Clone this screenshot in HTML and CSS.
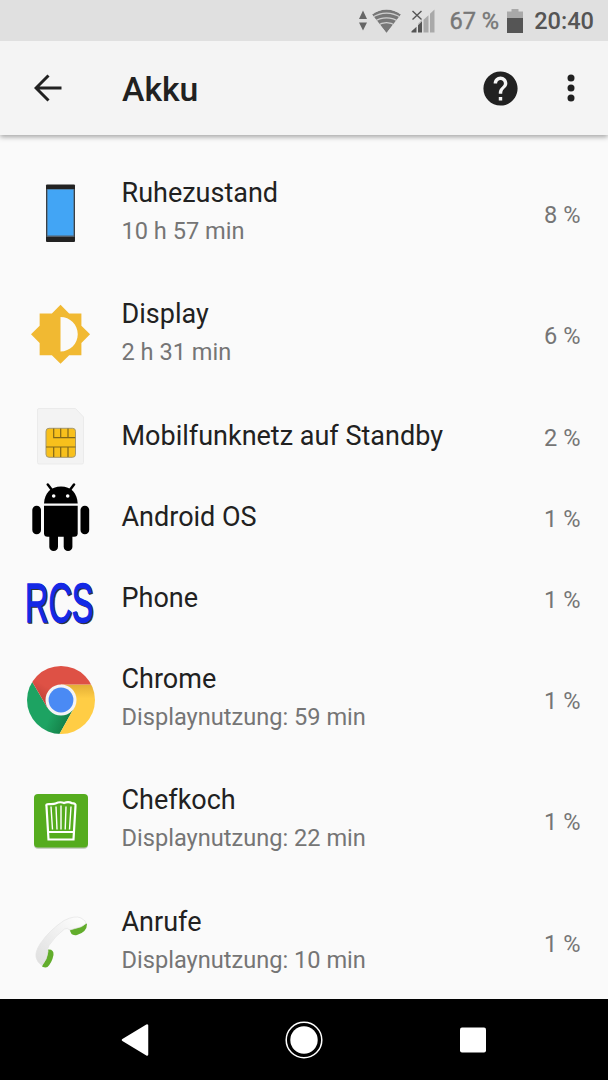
FILE: index.html
```html
<!DOCTYPE html>
<html lang="de">
<head>
    <meta charset="UTF-8">
    <meta name="viewport" content="width=device-width, initial-scale=1.0">
    <title>Akku</title>
    <link rel="stylesheet" href="styles.css">
</head>
<body>

<div class="screen">
    <div class="status-bar">
        <svg class="status-icons" width="76" height="24" viewBox="0 0 76 24">
            <path d="M0 10l4-8.500 4 8.500zM0 13.500h8l-4 8z" fill="#666"/>
            <clipPath id="fan"><path d="M13 5.500Q27.500-4.500 42 5.500L27.500 24z"/></clipPath>
            <g clip-path="url(#fan)">
                <path d="M13 5.500Q27.500-4.500 42 5.500L27.500 24z" fill="#777"/>
                <path d="M12 9.200Q27.500-1 43 9.200M14 13.200Q27.500 4.500 41 13.200M18 16.700Q27.500 10.500 37 16.700" fill="none" stroke="#cfcfcf" stroke-width="1.300"/>
            </g>
            <path d="M53.500 2l9 8.500M62.500 2l-9 8.500" stroke="#555" stroke-width="1.400"/>
            <path d="M52.500 23.500v-1.200l5-4.500v5.700zM59 23.500v-7.200l4-4v11.200z" fill="#555"/>
            <path d="M64.500 23.500V10.800l5-4.600v17.300zM71 23.500V4.800l4.500-4.300v23z" fill="#a9a9a9"/>
            <path d="M59 16.300l4-4V11l-4 4z" fill="#a9a9a9"/>
        </svg>
        <span class="battery-level">67 %</span>
        <svg class="battery" width="16" height="24" viewBox="0 0 16 24">
            <path d="M0 2.500h4.500V0h7v2.500H16V9H0z" fill="#a9a9a9"/>
            <path d="M0 9h16v15H0z" fill="#555"/>
        </svg>
        <span class="clock">20:40</span>
    </div>

    <div class="toolbar">
        <svg class="back" width="28" height="28" viewBox="0 0 28 28">
            <path d="M14.500 1.500L2 14l12.500 12.500M2 14h25.500" fill="none" stroke="#212121" stroke-width="3"/>
        </svg>
        <h1>Akku</h1>
        <svg class="help" width="41" height="41" viewBox="0 0 24 24">
            <path fill="#212121" d="M12 2C6.480 2 2 6.480 2 12s4.480 10 10 10 10-4.480 10-10S17.520 2 12 2zm1 17h-2v-2h2v2zm2.070-7.750l-.9.920C13.450 12.900 13 13.500 13 15h-2v-.5c0-1.100.45-2.100 1.170-2.830l1.240-1.260c.37-.36.59-.86.59-1.410 0-1.100-.9-2-2-2s-2 .9-2 2H8c0-2.210 1.790-4 4-4s4 1.790 4 4c0 .88-.36 1.680-.93 2.250z"/>
        </svg>
        <svg class="more" width="8" height="28" viewBox="0 0 8 28">
            <g fill="#212121"><circle cx="4" cy="4" r="3.500"/><circle cx="4" cy="14" r="3.500"/><circle cx="4" cy="24" r="3.500"/></g>
        </svg>
    </div>

    <div class="usage-list">
        <div class="row tall">
            <svg class="app-icon" viewBox="0 0 68 68">
                <rect x="19" y="5.500" width="29" height="57.500" rx="1" fill="#222"/>
                <rect x="19.500" y="10" width="28" height="48" fill="#55606b"/>
                <rect x="20.500" y="10.500" width="26" height="46" fill="#42a5f5"/>
            </svg>
            <div class="info">
                <h2>Ruhezustand</h2>
                <p>10 h 57 min</p>
            </div>
            <span class="percent">8 %</span>
        </div>

        <div class="row tall">
            <svg class="app-icon" viewBox="0 0 68 68">
                <path transform="translate(2.200 2) scale(2.610)" fill="#f1b932" d="M20 15.310L23.310 12 20 8.690V4h-4.690L12 .69 8.690 4H4v4.690L.69 12 4 15.310V20h4.690L12 23.310 15.310 20H20v-4.690zM12 18.600V5.400c3.650 0 6.600 2.960 6.600 6.600s-2.950 6.600-6.600 6.600z"/>
            </svg>
            <div class="info">
                <h2>Display</h2>
                <p>2 h 31 min</p>
            </div>
            <span class="percent">6 %</span>
        </div>

        <div class="row">
            <svg class="app-icon" viewBox="0 0 68 68">
                <path d="M12 6.500h36.500l8 8.500v45.500q0 1.500-1.500 1.500H12q-1.500 0-1.500-1.500V8q0-1.500 1.500-1.500z" fill="#f3f3f3" stroke="#ebebeb"/>
                <rect x="19" y="26.300" width="29.500" height="29" rx="3" fill="#f8c01c" stroke="#a39770"/>
                <path d="M26.700 26.500v9.200h21.500M33.700 26.500v9.200M41 26.500v9.200M19 45h29.500M26.700 45v10M33.700 45v10M41 45v10" fill="none" stroke="#806619" stroke-width="1.200"/>
            </svg>
            <div class="info">
                <h2>Mobilfunknetz auf Standby</h2>
            </div>
            <span class="percent">2 %</span>
        </div>

        <div class="row">
            <svg class="app-icon" viewBox="0 0 68 68">
                <path d="M17 20.500C17.500 10 24 3.500 34 3.500S50.200 10 50.700 20.500z"/>
                <path d="M20.800 1.500l4.500 6M47 1.500l-4.500 6" stroke="#000" stroke-width="2.500" stroke-linecap="round"/>
                <path d="M17 22.800h33.700v27.500q0 3.500-3.500 3.500H20.500q-3.500 0-3.500-3.500z"/>
                <rect x="5.300" y="22.700" width="8.700" height="28.500" rx="4.300"/>
                <rect x="53.500" y="22.700" width="8.700" height="28.500" rx="4.300"/>
                <rect x="22.300" y="45" width="8.700" height="23" rx="4.300"/>
                <rect x="36.700" y="45" width="8.700" height="23" rx="4.300"/>
                <circle cx="26.700" cy="13" r="1.800" fill="#fff"/>
                <circle cx="40.700" cy="13" r="1.800" fill="#fff"/>
            </svg>
            <div class="info">
                <h2>Android OS</h2>
            </div>
            <span class="percent">1 %</span>
        </div>

        <div class="row">
            <svg class="app-icon rcs" viewBox="0 0 68 68">
                <text class="rcs-shadow" transform="translate(-1 58.500) scale(.6 1)" textLength="114" lengthAdjust="spacingAndGlyphs">RCS</text>
                <text class="rcs-text" transform="translate(-2 57.500) scale(.6 1)" textLength="114" lengthAdjust="spacingAndGlyphs">RCS</text>
            </svg>
            <div class="info">
                <h2>Phone</h2>
            </div>
            <span class="percent">1 %</span>
        </div>

        <div class="row tall">
            <svg class="app-icon chrome" viewBox="0 0 68 68">
                <linearGradient id="redShade" x1="0" y1="1" x2="1" y2="0"><stop offset=".1" stop-color="#b63c34"/><stop offset=".4" stop-color="#de5145"/></linearGradient>
                <linearGradient id="yellowShade" x1="0" y1="0" x2="0" y2="1"><stop offset="0" stop-color="#e3ae36"/><stop offset=".28" stop-color="#ffcd45"/></linearGradient>
                <linearGradient id="greenShade" x1="0" y1="0" x2="1" y2=".5"><stop offset=".65" stop-color="#1da362"/><stop offset="1" stop-color="#148048"/></linearGradient>
                <clipPath id="disc"><circle cx="34" cy="34" r="34"/></clipPath>
                <g clip-path="url(#disc)">
                    <path d="M5.300 16L20.500 42 34 34l13 8L32.500 68H0V16z" fill="url(#greenShade)"/>
                    <path d="M34 18.500h34V68H32.500L47 42 34 34z" fill="url(#yellowShade)"/>
                    <path d="M5.300 16L0 0h68v18.500H34V34l-13.500 8z" fill="url(#redShade)"/>
                </g>
                <circle cx="34" cy="34" r="15.500" fill="#f4f4f4"/>
                <circle cx="34" cy="34" r="12.400" fill="#4a8af4"/>
            </svg>
            <div class="info">
                <h2>Chrome</h2>
                <p>Displaynutzung: 59 min</p>
            </div>
            <span class="percent">1 %</span>
        </div>

        <div class="row tall">
            <svg class="app-icon" viewBox="0 0 68 68">
                <rect x="7" y="8.300" width="54" height="53.500" rx="4" fill="#b9c4b3"/>
                <rect x="7" y="7" width="54" height="53.500" rx="4" fill="#55ac1e"/>
                <g fill="none" stroke="#fff" stroke-width="2.200">
                    <path d="M21.500 52.500L19.500 19.500Q18.500 17 22 17 27 17.200 28.500 16.500 33 14.300 37 16q4.500-2 8 .2 4 0 3.500 2.500L46.500 52.500zM21.500 45h25"/>
                    <path d="M24 19.500l1.500 23M29 19.500l1 23M34 18.500v24M39 19.500l-.8 23M44 19.500l-1.500 23" stroke-width="1.400"/>
                </g>
            </svg>
            <div class="info">
                <h2>Chefkoch</h2>
                <p>Displaynutzung: 22 min</p>
            </div>
            <span class="percent">1 %</span>
        </div>

        <div class="row tall">
            <svg class="app-icon" viewBox="0 3 68 68">
                <linearGradient id="handset" x1="1" y1="0" x2="0" y2="1"><stop offset="0" stop-color="#fff"/><stop offset="1" stop-color="#dedede"/></linearGradient>
                <path d="M42.500 23.500Q43.500 31.500 50 30 60 27 60 19L57 17zM21 44.500q6-.5 5.500 5.500-1.500 7.500-6 12-2 1.200-5.500-.5z" fill="#62ad2c"/>
                <path d="M9 52Q8 47 13 39 22 25.500 37 15.500 48 10 54 13 59.500 16 59 18.500 55 22.500 48 23.500L43 25Q40 22.500 37.500 24 28 31 22 40.500 20 44 21 46.500 20.500 54 15 60.500 10 57.500 9 52z" fill="url(#handset)" stroke="#e4e4e4" stroke-width=".7"/>
            </svg>
            <div class="info">
                <h2>Anrufe</h2>
                <p>Displaynutzung: 10 min</p>
            </div>
            <span class="percent">1 %</span>
        </div>
    </div>

    <div class="nav-bar">
        <svg width="28" height="34" viewBox="0 0 28 34">
            <path d="M2 17L26 2.500v29z" fill="#fff" stroke="#fff" stroke-width="2.500" stroke-linejoin="round"/>
        </svg>
        <svg class="home" width="38" height="38" viewBox="0 0 38 38">
            <circle cx="19" cy="19" r="17.800" fill="none" stroke="#fff" stroke-width="1.500"/>
            <circle cx="19" cy="19" r="13.700" fill="#fff"/>
        </svg>
        <svg width="26" height="26" viewBox="0 0 26 26">
            <rect y=".5" width="26" height="25" rx="2" fill="#fff"/>
        </svg>
    </div>
</div>

</body>
</html>
```
FILE: styles.css
```css
body {
    margin: 0;
    font-family: Roboto, sans-serif;
    background: #fafafa;
    color: #212121;
}
.screen {
    height: 1080px;
    display: flex;
    flex-direction: column;
    overflow: hidden;
}
svg {
    display: block;
    flex-shrink: 0;
}

/* Status bar */
.status-bar {
    height: 41px;
    flex-shrink: 0;
    box-sizing: border-box;
    padding: 0 14px 0 0;
    display: flex;
    justify-content: flex-end;
    align-items: center;
    background: #e0e0e0;
    font-size: 23.6px;
    font-weight: 500;
    white-space: nowrap;
    z-index: 2;
}
.status-icons {
    margin-right: 14px;
}
.battery-level {
    color: #777;
    font-weight: 400;
    -webkit-text-stroke: 0.4px #777;
}
.battery {
    margin: 0 11px 0 8px;
}
.clock {
    color: #555;
}

/* Toolbar */
.toolbar {
    height: 94px;
    flex-shrink: 0;
    box-sizing: border-box;
    padding: 0 33px 0 33.5px;
    display: flex;
    align-items: center;
    background: #f4f4f4;
    box-shadow: 0 2px 5px rgba(0, 0, 0, 0.35);
    z-index: 1;
}
.toolbar h1 {
    flex: 1;
    margin: 3px 0 0 60.5px;
    font-size: 33.75px;
    font-weight: 500;
}
.help {
    margin-right: 46.5px;
}

/* Battery usage */
.usage-list {
    flex: 1;
    min-height: 0;
    padding-top: 17.5px;
    overflow: hidden;
}
.row {
    height: 81px;
    box-sizing: border-box;
    padding: 0 27.5px 0 27px;
    display: flex;
    align-items: center;
}
.row.tall {
    height: 121.5px;
}
.app-icon {
    width: 68px;
    height: 68px;
}
.info {
    flex: 1;
    margin-left: 26.5px;
}
.info h2 {
    margin: 0;
    font-size: 27px;
    font-weight: 400;
    line-height: 32px;
}
.info p {
    margin: 8px 0 0;
    font-size: 23.6px;
    line-height: 28px;
    color: #757575;
}
.tall .info {
    padding-bottom: 5px;
}
.percent {
    margin-top: 3px;
    font-size: 23.6px;
    color: #757575;
}
.chrome {
    margin-top: 1px;
}
.rcs {
    overflow: visible;
    font-family: "Liberation Sans", sans-serif;
    font-size: 55px;
}
.rcs-shadow {
    fill: #333;
    stroke: #333;
    stroke-width: 1.5px;
}
.rcs-text {
    fill: #1429e6;
    stroke: #1429e6;
    stroke-width: 1.5px;
}

/* Navigation bar */
.nav-bar {
    height: 81px;
    flex-shrink: 0;
    box-sizing: border-box;
    padding: 0 122px 0 121px;
    display: flex;
    justify-content: space-between;
    align-items: center;
    background: #000;
}
.home {
    margin: 0 1px 0 -1px;
}
```
